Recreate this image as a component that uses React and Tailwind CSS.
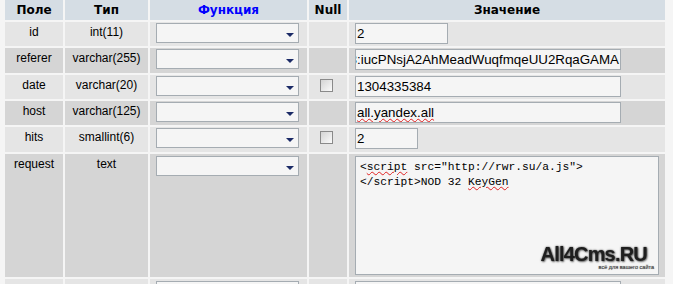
import React from "react";

const ODD = "bg-[#e5e5e5]";
const EVEN = "bg-[#d5d5d5]";

function Select() {
  return (
    <div className="relative ml-[6px] mt-[1px] h-[20px] w-[143px] border border-[#a5acb2] bg-[#f5f5f5]">
      <svg className="absolute right-[4px] top-[9px]" width="8" height="4" viewBox="0 0 8 4">
        <polygon points="0,0 8,0 4,4" fill="#1b2a66" />
      </svg>
    </div>
  );
}

function Checkbox() {
  return (
    <div className="ml-[11px] mt-[4px] h-[13px] w-[13px] border border-[#8a8a8a] bg-gradient-to-br from-[#d4d4d4] to-[#fbfbfb]" />
  );
}

const spellCls = "underline decoration-wavy decoration-[#e02020] decoration-1 underline-offset-[1px]";

function Input({ value, width, clip, spell }) {
  return (
    <div
      className={
        "ml-[6px] mt-[1px] flex h-[21px] items-center overflow-hidden whitespace-nowrap border border-[#a5acb2] bg-[#f5f5f5] text-[13.33px] text-black " +
        (clip ? "justify-end pr-[1px]" : "pl-[1px]")
      }
      style={{ width }}
    >
      {spell ? <span className={spellCls}>{value}</span> : <span className="shrink-0">{value}</span>}
    </div>
  );
}

const rows = [
  { f: "id", t: "int(11)", nul: false, val: "2", w: 93, bg: ODD },
  { f: "referer", t: "varchar(255)", nul: false, val: "8:iucPNsjA2AhMeadWuqfmqeUU2RqaGAMA", w: 266, bg: EVEN, clip: true },
  { f: "date", t: "varchar(20)", nul: true, val: "1304335384", w: 266, bg: ODD },
  { f: "host", t: "varchar(125)", nul: false, val: "all.yandex.all", w: 266, bg: EVEN, spell: true },
  { f: "hits", t: "smallint(6)", nul: true, val: "2", w: 63, bg: ODD },
];

const textCell = "pt-[3px] text-center text-[12px] leading-[14px] text-black";
const headCell = "flex items-center justify-center bg-[#d5dde4] text-[12px] font-bold";
const headFont = { fontFamily: '"DejaVu Sans", Tahoma, sans-serif' };

export default function App() {
  return (
    <div
      className="h-[284px] w-[673px] overflow-hidden bg-[#f5f5f5] pl-[5px]"
      style={{ fontFamily: '"Liberation Sans", Arial, sans-serif' }}
    >
      <div className="grid grid-cols-[58px_83px_157px_38px_316px] grid-rows-[20px_24px_25px_24px_24px_25px_123px_24px] gap-[2px]">
        {/* header */}
        <div className={headCell + " text-black"} style={headFont}>Поле</div>
        <div className={headCell + " text-black"} style={headFont}>Тип</div>
        <div className={headCell + " text-[#0000ff]"} style={headFont}>Функция</div>
        <div className={headCell + " text-black"} style={headFont}>Null</div>
        <div className={headCell + " text-black"} style={headFont}>Значение</div>

        {rows.map((r) => (
          <React.Fragment key={r.f}>
            <div className={r.bg + " " + textCell}>{r.f}</div>
            <div className={r.bg + " " + textCell}>{r.t}</div>
            <div className={r.bg}>
              <Select />
            </div>
            <div className={r.bg}>{r.nul ? <Checkbox /> : null}</div>
            <div className={r.bg}>
              <Input value={r.val} width={r.w} clip={r.clip} spell={r.spell} />
            </div>
          </React.Fragment>
        ))}

        {/* request row */}
        <div className={EVEN + " " + textCell}>request</div>
        <div className={EVEN + " " + textCell}>text</div>
        <div className={EVEN + " pt-[1px]"}>
          <Select />
        </div>
        <div className={EVEN}></div>
        <div className={EVEN + " pt-[2px]"}>
          <div
            className="relative ml-[6px] h-[119px] w-[304px] overflow-hidden border border-[#a5acb2] bg-[#f5f5f5] pl-[4px] pt-[3px] text-[11.25px] leading-[15px] text-black"
            style={{ fontFamily: '"Liberation Mono", "Courier New", monospace' }}
          >
            <div className="whitespace-nowrap">
              &lt;<span className={spellCls}>script</span> src="http://rwr.su/a.js"&gt;
            </div>
            <div className="whitespace-nowrap">
              &lt;/script&gt;NOD 32 <span className={spellCls}>KeyGen</span>
            </div>
            <div
              className="absolute bottom-[3px] right-[4px] flex flex-col items-end"
              style={{ fontFamily: '"Liberation Sans", Arial, sans-serif' }}
            >
              <div
                className="mr-[7px] text-[20px] font-black leading-[17px] tracking-[-0.8px] text-[#1e1e1e]"
                style={{ textShadow: "0 0 2px rgba(0,0,0,0.7), 1px 1px 2px rgba(0,0,0,0.5)", filter: "blur(0.4px)" }}
              >
                All4Cms.RU
              </div>
              <div
                className="mt-[1px] text-[5.5px] leading-[7px] text-[#333]"
                style={{ textShadow: "0 0 1px rgba(0,0,0,0.5)" }}
              >
                всё для вашего сайта
              </div>
            </div>
          </div>
        </div>

        {/* next row (partially visible) */}
        <div className={ODD}></div>
        <div className={ODD}></div>
        <div className={ODD + " pt-[2px]"}>
          <div className="ml-[6px] h-[20px] w-[143px] border border-[#a5acb2] bg-[#f5f5f5]" />
        </div>
        <div className={ODD}></div>
        <div className={ODD + " pt-[2px]"}>
          <div className="ml-[6px] h-[21px] w-[266px] border border-[#a5acb2] bg-[#f5f5f5]" />
        </div>
      </div>
    </div>
  );
}
